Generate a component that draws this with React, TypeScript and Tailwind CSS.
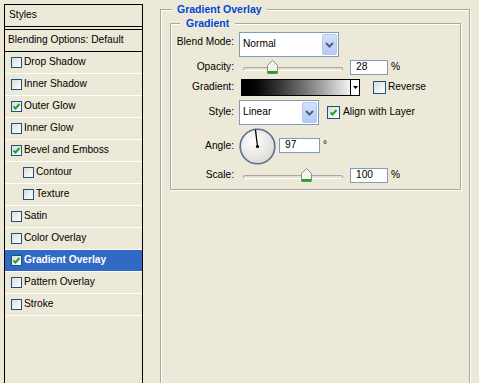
import React from "react";

function Check({ big = false, checked = false }: { big?: boolean; checked?: boolean }) {
  return (
    <div
      className={
        (big ? "w-[13px] h-[13px]" : "w-[11px] h-[11px]") +
        " shrink-0 border border-[#1c5180] bg-linear-to-br from-[#dcdcd7] to-white flex items-center justify-center"
      }
    >
      {checked && (
        <svg width="9" height="9" viewBox="0 0 9 9">
          <polyline points="1.5,4.5 3.5,6.5 7.5,2" fill="none" stroke="#21a121" strokeWidth="2" />
        </svg>
      )}
    </div>
  );
}

const rows: { label: string; checked?: boolean; indent?: boolean; active?: boolean }[] = [
  { label: "Drop Shadow" },
  { label: "Inner Shadow" },
  { label: "Outer Glow", checked: true },
  { label: "Inner Glow" },
  { label: "Bevel and Emboss", checked: true },
  { label: "Contour", indent: true },
  { label: "Texture", indent: true },
  { label: "Satin" },
  { label: "Color Overlay" },
  { label: "Gradient Overlay", checked: true, active: true },
  { label: "Pattern Overlay" },
  { label: "Stroke" },
];

function Select({ value, width }: { value: string; width: string }) {
  return (
    <div className={width + " h-[25px] shrink-0 border border-[#7f9db9] bg-white flex items-center justify-between pl-[3px] pr-[1px]"}>
      <span>{value}</span>
      <div className="w-[15px] h-[21px] rounded-[2px] border border-[#b7c8f3] bg-linear-to-b from-[#d4e0fc] to-[#b6caf7] flex items-center justify-center">
        <svg width="9" height="6" viewBox="0 0 9 6">
          <polyline points="1,1 4.5,4.5 8,1" fill="none" stroke="#4d6185" strokeWidth="2" />
        </svg>
      </div>
    </div>
  );
}

function Slider({ thumb }: { thumb: string }) {
  return (
    <div className="relative w-[104px] h-[15px] shrink-0">
      <div className="absolute left-[4px] right-0 top-[7px] h-[4px] rounded-full border border-[#a9a9a0] border-b-white bg-[#e4e2d6]" />
      <svg className={"absolute top-0 " + thumb} width="11" height="14" viewBox="0 0 11 14">
        <path d="M0.5 5.5 L5.5 0.5 L10.5 5.5 L10.5 13.5 L0.5 13.5 Z" fill="#f4f4f0" stroke="#8f8f8a" />
        <rect x="1" y="11" width="9" height="2.5" fill="#21a121" />
      </svg>
    </div>
  );
}

function Field({ value, width }: { value: string; width: string }) {
  return (
    <div className={width + " h-[15px] shrink-0 border border-[#7f9db9] bg-white flex items-center pl-[5px]"}>
      {value}
    </div>
  );
}

function Label({ text, extra = "" }: { text: string; extra?: string }) {
  return <div className={"w-[63px] shrink-0 text-right " + extra}>{text}</div>;
}

export default function App() {
  return (
    <div className="w-[479px] h-[383px] overflow-hidden bg-[#ece9d8] flex font-['Liberation_Sans',sans-serif] text-[10.2px] leading-none text-black">
      <div className="ml-[4px] mt-[4px] w-[139px] h-[390px] shrink-0 border-x border-t border-black flex flex-col">
        <div className="h-[22px] border-b border-black flex items-center pl-[4px]">Styles</div>
        <div className="mt-[2px] h-[23px] border-y border-black flex items-center pl-[3px]">Blending Options: Default</div>
        {rows.map((r) => (
          <div
            key={r.label}
            className={
              "h-[22px] border-b border-white flex items-center gap-[2px] " +
              (r.indent ? "pl-[18px] " : "pl-[6px] ") +
              (r.active ? "bg-[#316ac5] text-white font-bold" : "")
            }
          >
            <Check checked={r.checked} />
            <span>{r.label}</span>
          </div>
        ))}
      </div>

      <div className="ml-[17px] shrink-0">
        <fieldset className="mt-[3px] w-[310px] h-[420px] border border-[#aca899] shadow-[inset_1px_1px_0_#fff,1px_1px_0_#fff]">
          <legend className="ml-[11px] px-[5px] bg-[#ece9d8] text-[#0046d5] font-bold text-[10.5px] leading-[13px]">
            Gradient Overlay
          </legend>
          <fieldset className="ml-[9px] mt-[1px] w-[291px] border border-[#aca899] shadow-[inset_1px_1px_0_#fff,1px_1px_0_#fff] pb-[6px]">
            <legend className="ml-[9px] px-[6px] bg-[#ece9d8] text-[#0046d5] font-bold text-[10.5px] leading-[13px]">
              Gradient
            </legend>

            <div className="mt-[2px] h-[25px] flex items-start">
              <Label text="Blend Mode:" extra="pt-[5px]" />
              <div className="ml-[5px]">
                <Select value="Normal" width="w-[100px]" />
              </div>
            </div>

            <div className="mt-[3px] h-[15px] flex items-center">
              <Label text="Opacity:" />
              <div className="ml-[5px]">
                <Slider thumb="left-[28px]" />
              </div>
              <div className="ml-[7px]">
                <Field value="28" width="w-[38px]" />
              </div>
              <span className="ml-[3px]">%</span>
            </div>

            <div className="mt-[4px] h-[17px] flex items-center">
              <Label text="Gradient:" />
              <div className="ml-[7px] flex h-[17px] w-[119px] border border-black">
                <div className="flex-1 bg-linear-to-r from-black to-[#f4f4f4]" />
                <div className="w-[9px] border-l border-black bg-white flex items-center justify-center">
                  <svg width="5" height="3" viewBox="0 0 5 3">
                    <path d="M0 0 H5 L2.5 3 Z" fill="#000" />
                  </svg>
                </div>
              </div>
              <div className="ml-[13px]">
                <Check big />
              </div>
              <span className="ml-[2px]">Reverse</span>
            </div>

            <div className="mt-[4px] h-[25px] flex items-center">
              <Label text="Style:" />
              <div className="ml-[5px]">
                <Select value="Linear" width="w-[80px]" />
              </div>
              <div className="ml-[8px]">
                <Check big checked />
              </div>
              <span className="ml-[3px]">Align with Layer</span>
            </div>

            <div className="mt-[3px] h-[36px] flex items-center">
              <Label text="Angle:" />
              <svg className="ml-[5px] shrink-0" width="37" height="37" viewBox="0 0 37 37">
                <defs>
                  <radialGradient id="dial" cx="40%" cy="35%" r="70%">
                    <stop offset="0%" stopColor="#ffffff" />
                    <stop offset="100%" stopColor="#d9d9d3" />
                  </radialGradient>
                </defs>
                <circle cx="18.5" cy="18.5" r="17.3" fill="url(#dial)" stroke="#5a6e94" strokeWidth="1.6" />
                <line x1="18.5" y1="18.5" x2="16.4" y2="1.5" stroke="#000" strokeWidth="1.3" />
                <circle cx="18.5" cy="18.5" r="1.6" fill="#000" />
              </svg>
              <div className="ml-[3px] self-start mt-[10px]">
                <Field value="97" width="w-[41px]" />
              </div>
              <span className="ml-[3px] self-start mt-[12px]">°</span>
            </div>

            <div className="mt-[4px] h-[15px] flex items-center">
              <Label text="Scale:" />
              <div className="ml-[5px]">
                <Slider thumb="left-[62px]" />
              </div>
              <div className="ml-[7px]">
                <Field value="100" width="w-[38px]" />
              </div>
              <span className="ml-[3px]">%</span>
            </div>
          </fieldset>
        </fieldset>
      </div>
    </div>
  );
}
